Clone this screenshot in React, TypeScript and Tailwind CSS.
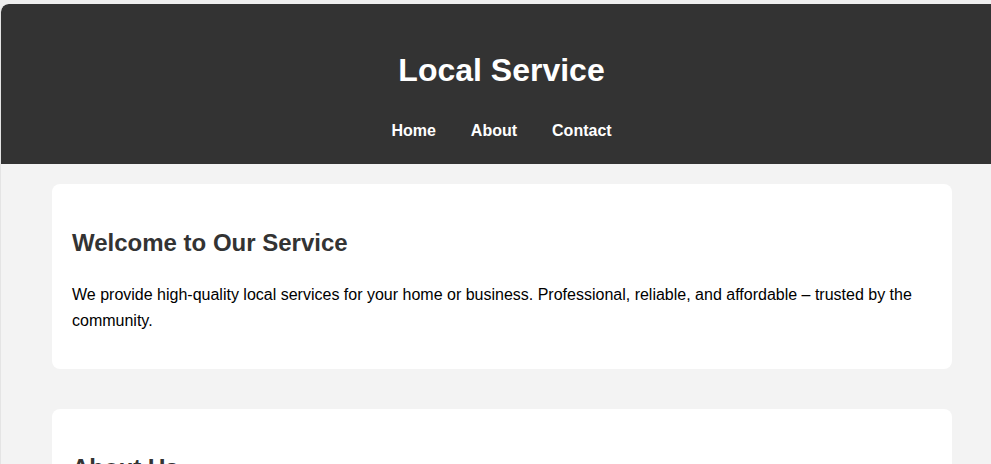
import React from 'react';

const links = ['Home', 'About', 'Contact'];

const App: React.FC = () => {
  return (
    <div className="h-[464px] w-full overflow-hidden bg-[#efefef] pt-[4px] font-['Liberation_Sans',Arial,sans-serif]">
      <div className="w-[1003px] h-full rounded-tl-lg border-l border-[#e4e4e4] bg-[#f3f3f3] overflow-hidden">
        <header className="bg-[#333333] text-white text-center pt-[48px] pb-[24px] pr-[1px] rounded-tl-lg">
          <h1 className="text-[32px] font-bold leading-[37px] mb-[33px]">Local Service</h1>
          <nav className="flex justify-center gap-[35px] text-[16px] font-bold leading-[18px]">
            {links.map((l) => (
              <a key={l} href="#" className="text-white no-underline">
                {l}
              </a>
            ))}
          </nav>
        </header>

        <main className="flex flex-col items-center gap-[40px] pt-[20px]">
          <section className="w-[900px] bg-white rounded-lg px-[20px] pt-[18px] pb-[19px]">
            <h2 className="text-[24px] font-bold text-[#333333] leading-[38.4px] mt-[22px] mb-[20px]">
              Welcome to Our Service
            </h2>
            <p className="text-[16px] leading-[25.6px] text-black mb-[16px]">
              We provide high-quality local services for your home or business. Professional, reliable, and affordable – trusted by the community.
            </p>
          </section>

          <section className="w-[900px] bg-white rounded-lg px-[20px] pt-[18px] pb-[19px]">
            <h2 className="text-[24px] font-bold text-[#333333] leading-[38.4px] mt-[22px] mb-[20px]">
              About Us
            </h2>
            <p className="text-[16px] leading-[25.6px] text-black mb-[16px]">
              We are a locally owned team with years of experience serving our neighbors.
            </p>
          </section>
        </main>
      </div>
    </div>
  );
};

export default App;
